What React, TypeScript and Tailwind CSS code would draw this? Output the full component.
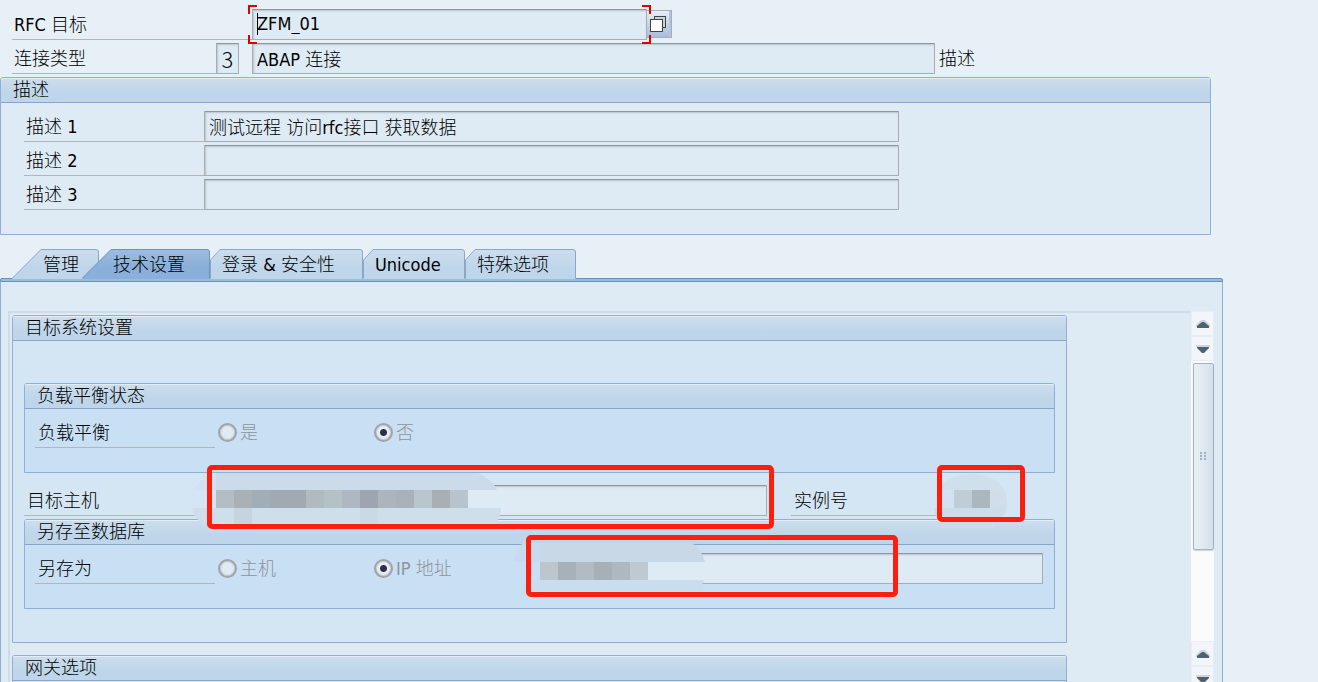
import { useState } from "react";
import type { ReactNode } from "react";
import clsx from "clsx";

const fieldClass =
  "h-[31px] min-w-0 rounded-[1px] border border-[#a9adb0] border-t-[#8f9598] bg-[#deebf5] px-1 pb-0.5 text-lg leading-6 text-black shadow-[inset_1px_1px_2px_#b9c4cc] outline-none";

const tabs = [
  { id: "admin", label: "管理", button: "w-[87px] pl-[31px]", width: 87, slant: 29 },
  { id: "tech", label: "技术设置", button: "-ml-[17px] w-32 pl-[31px]", width: 128, slant: 29 },
  { id: "logon", label: "登录 & 安全性", button: "w-[153px] pl-3", width: 153, slant: 10 },
  { id: "unicode", label: "Unicode", button: "w-[102px] pl-3", width: 102, slant: 10 },
  { id: "special", label: "特殊选项", button: "w-[111px] pl-3", width: 111, slant: 10 },
];

const hostPixels = [
  "#b3bdc4", "#a9b1b6", "#a2aeb7", "#a1a9b3", "#a1a9b3", "#afbbc1", "#b4c1c7",
  "#aeb8c2", "#9da6b0", "#acb4be", "#a9b2bb", "#b9c6cd", "#a8b0b6", "#b7c4cd",
];
const ipPixels = ["#bdc6cd", "#a6b1ba", "#b2bac3", "#a8b0b7", "#aeb8c0", "#bec9d2"];

function Group({ title, className, body, children }: { title: string; className?: string; body: string; children?: ReactNode }) {
  return (
    <section className={clsx("rounded-t-[3px] border border-[#8fb0d3]", className)}>
      <h2 className="h-[25px] rounded-t-[2px] border-b border-[#86a5c8] bg-linear-to-b from-[#cddded] to-[#bfd6ea] to-60% px-3 text-lg leading-6 font-light shadow-[inset_0_1px_0_#e3edf6]">
        {title}
      </h2>
      <div className={body}>{children}</div>
    </section>
  );
}

function FieldLabel({ htmlFor, className, children }: { htmlFor?: string; className: string; children: ReactNode }) {
  return (
    <label htmlFor={htmlFor} className={clsx("h-[31px] shrink-0 border-b border-[#b1b6ba] text-lg leading-8", className)}>
      {children}
    </label>
  );
}

function Radio({ name, label, checked }: { name: string; label: string; checked?: boolean }) {
  return (
    <label className="flex w-39 shrink-0 items-center gap-[3px] text-lg leading-6 text-[#8e9499]">
      <input
        type="radio"
        name={name}
        defaultChecked={checked}
        disabled
        className="size-[19px] appearance-none rounded-full border-2 border-[#a0a5a9] bg-[#deebf5] shadow-[inset_0_0_2px_#8a9096] checked:bg-[radial-gradient(circle,#2c3047_3px,#e6eef6_4px)]"
      />
      {label}
    </label>
  );
}

function Tab({ tab, active, onClick }: { tab: (typeof tabs)[number]; active: boolean; onClick: () => void }) {
  const w = tab.width;
  const s = tab.slant;
  const foot = s > 20 ? `M0.5 29` : `M0.5 29V11`;
  const top = `${foot}L${s} 0.5H${w - 3}Q${w - 0.5} 0.5 ${w - 0.5} 3V29`;
  return (
    <button
      type="button"
      role="tab"
      aria-selected={active}
      onClick={onClick}
      className={clsx("relative h-[29px] shrink-0 text-left text-lg leading-[31px]", tab.button, active && "z-10")}
    >
      <svg className="absolute top-0 left-0 overflow-visible" width={w} height="29" aria-hidden="true">
        <defs>
          <linearGradient id={`fill-${tab.id}`} x1="0" y1="0" x2="0" y2="1">
            <stop offset="0" stopColor={active ? "#9dbde0" : "#ccdded"} />
            <stop offset="0.6" stopColor={active ? "#8aafda" : "#bfd6ea"} />
          </linearGradient>
        </defs>
        <path d={`${top}V30H0Z`} fill={`url(#fill-${tab.id})`} />
        <path d={top} fill="none" stroke={active ? "#6c94c0" : "#8ba7c5"} />
      </svg>
      <span className="relative">{tab.label}</span>
    </button>
  );
}

function ScrollButton({ down }: { down?: boolean }) {
  return (
    <button
      type="button"
      aria-label={down ? "向下滚动" : "向上滚动"}
      className="flex h-[25px] shrink-0 items-center justify-center border border-[#eaeef4] bg-[#f2f6fb]"
    >
      <svg width="14" height="8" viewBox="0 0 14 8" aria-hidden="true">
        {down ? (
          <>
            <path d="M0 0h14v2H0z" fill="#cfd5da" />
            <path d="M1 2h12v1l-5 5H6L1 3z" fill="#4d6270" />
          </>
        ) : (
          <>
            <path d="M5 0h4l5 5v2H0V5z" fill="#cfd5da" />
            <path d="M6 2h2l5 4v2H1V6z" fill="#4d6270" />
          </>
        )}
      </svg>
    </button>
  );
}

export default function App() {
  const [activeTab, setActiveTab] = useState("tech");

  return (
    <main className="h-screen overflow-hidden bg-[#e8f0f7] pt-[9px] pr-[95px] font-['DejaVu_Sans_Condensed','Noto_Sans_CJK_SC',sans-serif] font-light text-black">
      <div className="flex flex-col gap-[3px] pl-3">
        <div className="flex">
          <FieldLabel htmlFor="dest" className="w-60 pl-0.5">RFC 目标</FieldLabel>
          <div className="relative flex">
            <input id="dest" defaultValue="ZFM_01" className={clsx(fieldClass, "w-[395px]")} />
            <span className="absolute top-1 left-[5px] h-[22px] w-px bg-black" />
            <span className="absolute -top-1 -left-1 z-10 size-[9px] border-t-2 border-l-2 border-[#e00000]" />
            <span className="absolute -bottom-1 -left-1 z-10 size-[9px] border-b-2 border-l-2 border-[#e00000]" />
            <span className="absolute -top-1 -right-1 z-10 size-[9px] border-t-2 border-r-2 border-[#e00000]" />
            <span className="absolute -right-1 -bottom-1 z-10 size-[9px] border-r-2 border-b-2 border-[#e00000]" />
          </div>
          <button
            type="button"
            aria-label="搜索帮助"
            className="mt-px flex h-7 w-[25px] items-center border border-l-0 border-[#a9adb8] bg-linear-to-b from-[#e6edf6] to-[#a9bcdc] pl-[3px] shadow-[inset_-2px_0_0_#b4c3de]"
          >
            <svg width="17" height="17" viewBox="0 0 17 17" aria-hidden="true">
              <path d="M4 0h12v12H4z" fill="#45453f" />
              <path d="M5 1h10v10H5z" fill="#c3d3da" />
              <path d="M0 3h13v13H0z" fill="#45453f" />
              <path d="M1 4h11v11H1z" fill="#fff" />
            </svg>
          </button>
        </div>

        <div className="flex">
          <FieldLabel htmlFor="conn-type" className="w-[204px] pl-0.5">连接类型</FieldLabel>
          <input
            id="conn-type"
            defaultValue="3"
            className="h-[31px] w-[23px] border border-[#a9adb0] border-t-[#8f9598] bg-[#deebf5] pb-0.5 text-center font-['Noto_Sans_CJK_SC',sans-serif] text-[22px] leading-6 font-light shadow-[inset_1px_1px_2px_#b9c4cc] outline-none"
          />
          <input
            aria-label="连接类型文本"
            defaultValue="ABAP 连接"
            className={clsx(fieldClass, "ml-[13px] w-[683px]")}
          />
          <span className="pl-1 text-lg leading-8">描述</span>
        </div>
      </div>

      <Group title="描述" className="mt-[2px] mr-3 bg-[#deebf5]" body="flex flex-col gap-[3px] pt-2 pb-6 pl-[23px]">
        {["测试远程 访问rfc接口 获取数据", "", ""].map((text, i) => (
          <div key={i} className="flex">
            <FieldLabel htmlFor={`desc-${i}`} className="w-45 pl-0.5">描述 {i + 1}</FieldLabel>
            <input id={`desc-${i}`} defaultValue={text} className={clsx(fieldClass, "w-[695px]")} />
          </div>
        ))}
      </Group>

      <div role="tablist" className="mt-3.5 flex pl-3">
        {tabs.map((tab) => (
          <Tab key={tab.id} tab={tab} active={tab.id === activeTab} onClick={() => setActiveTab(tab.id)} />
        ))}
      </div>

      <div className="h-1 rounded-t-[2px] border border-[#6690bd] bg-[#9bbbe0]" />
      <div className="flex border-x border-[#8fb0d3] bg-[#deebf4] pt-[29px] pr-2 pl-[7px]">
        <div className="min-w-0 flex-1 border-t-2 border-l-2 border-[#ccdce9] pt-0.5 pr-[124px] pl-0.5">
          <Group title="目标系统设置" className="bg-[#d4e6f4]" body="px-[11px] pt-[42px] pb-[33px]">
            <Group title="负载平衡状态" className="bg-[#c9dff4]" body="flex pt-2 pb-6 pl-[10px]">
              <FieldLabel className="w-45 pl-[3px]">负载平衡</FieldLabel>
              <div role="radiogroup" aria-label="负载平衡" className="ml-[3px] flex">
                <Radio name="balance" label="是" />
                <Radio name="balance" label="否" checked />
              </div>
            </Group>

            <div className="mt-3 mb-[3px] flex">
              <FieldLabel htmlFor="host" className="w-45 pl-[3px]">目标主机</FieldLabel>
              <div className="relative z-10 flex flex-1">
                <input id="host" className={clsx(fieldClass, "flex-1")} />
                <svg className="absolute -top-5 -left-3.5" width="314" height="66" aria-hidden="true">
                  <path d="M4 25Q10 12 26 8H288Q302 14 307 25Z" fill="#cbdbe9" />
                  <path d="M4 25Q10 12 26 8V25Z" fill="#d1e2f0" />
                  <path d="M3 25H307L312 43H3Z" fill="#deebf4" />
                  <path d="M3 25H26V43H3Z" fill="#d4e6f4" />
                  <path d="M2 43H311Q311 50 306 59H15Q3 54 2 43Z" fill="#cedfeb" />
                  {hostPixels.map((fill, i) => (
                    <rect key={i} x={26 + i * 18} y="25" width="18" height="18" fill={fill} />
                  ))}
                  <rect x="44" y="43" width="18" height="16" fill="#c6d4e0" />
                  <rect x="170" y="43" width="18" height="16" fill="#c9d9e5" />
                </svg>
                <div className="pointer-events-none absolute -top-5 -right-[7px] -bottom-[13px] left-[3px] rounded-[5px] border-[5px] border-[#ff1e0e]" />
              </div>
              <FieldLabel htmlFor="instance" className="ml-6 w-[146px] pl-[3px]">实例号</FieldLabel>
              <div className="relative z-10 mr-[30px] flex w-22">
                <input id="instance" className="h-[31px] w-full bg-transparent text-center text-lg outline-none" />
                <svg className="absolute -top-5 -left-1" width="92" height="68" aria-hidden="true">
                  <path d="M5 25Q14 9 40 9Q64 11 71 25V43H5Z" fill="#cfdfec" />
                  <path d="M71 25Q77 38 71 51H40V25Z" fill="#d0deeb" />
                  <path d="M1 43H72Q68 56 60 63H10Q2 54 1 43Z" fill="#cbdde9" />
                  <path d="M5 25H21V43H5Z" fill="#d1e3f2" />
                  <rect x="21" y="25" width="18" height="18" fill="#bfcdd7" />
                  <rect x="39" y="25" width="18" height="18" fill="#abb7be" />
                </svg>
                <div className="pointer-events-none absolute -top-5 right-0 -bottom-1.5 left-0 rounded-[5px] border-[5px] border-[#ff1e0e]" />
              </div>
            </div>

            <Group title="另存至数据库" className="bg-[#c9dff4]" body="flex pt-2 pr-[11px] pb-6 pl-[10px]">
              <FieldLabel className="w-45 pl-[3px]">另存为</FieldLabel>
              <div role="radiogroup" aria-label="另存为" className="ml-[3px] flex">
                <Radio name="save-as" label="主机" />
                <Radio name="save-as" label="IP 地址" checked />
              </div>
              <div className="relative z-10 flex flex-1">
                <input aria-label="IP 地址" className={clsx(fieldClass, "flex-1")} />
                <svg className="absolute -top-5 -left-[18px]" width="194" height="66" aria-hidden="true">
                  <path d="M2 29Q4 17 11 10H180Q190 17 193 29Z" fill="#c8d8e7" />
                  <path d="M2 29Q4 17 11 10H28V29Z" fill="#c6dbef" />
                  <path d="M12 29H192V47H12Z" fill="#deebf4" />
                  <path d="M12 29H28V52H12Z" fill="#cadff3" />
                  <path d="M12 47H192L190 52V60H12Z" fill="#c8ddee" />
                  {ipPixels.map((fill, i) => (
                    <rect key={i} x={28 + i * 18} y="29" width="18" height="18" fill={fill} />
                  ))}
                </svg>
                <div className="pointer-events-none absolute -top-[18px] -bottom-[13px] -left-1 w-[372px] rounded-[5px] border-[5px] border-[#ff1e0e]" />
              </div>
            </Group>
          </Group>

          <Group title="网关选项" className="mt-3 border-b-0 bg-[#d4e6f4]" body="h-2.5" />
        </div>

        <div className="flex w-[23px] flex-col bg-[#fafbfc]">
          <ScrollButton />
          <ScrollButton down />
          <div className="mt-0.5 ml-0.5 flex h-[187px] w-[21px] items-center justify-center rounded-[2px] border border-[#a6b0bf] bg-linear-to-r from-[#e9f0f6] via-[#e0e9f2] to-[#d3e0eb] shadow-[0_1px_1px_#cfd6dc]">
            <svg width="8" height="9" viewBox="0 0 8 9" fill="#9fb0bf" aria-hidden="true">
              <path d="M0 0h2v2H0zM4 0h2v2H4zM0 3h2v2H0zM4 3h2v2H4zM0 6h2v2H0zM4 6h2v2H4z" />
            </svg>
          </div>
          <div className="flex-1" />
          <ScrollButton />
          <ScrollButton down />
        </div>
      </div>
    </main>
  );
}
